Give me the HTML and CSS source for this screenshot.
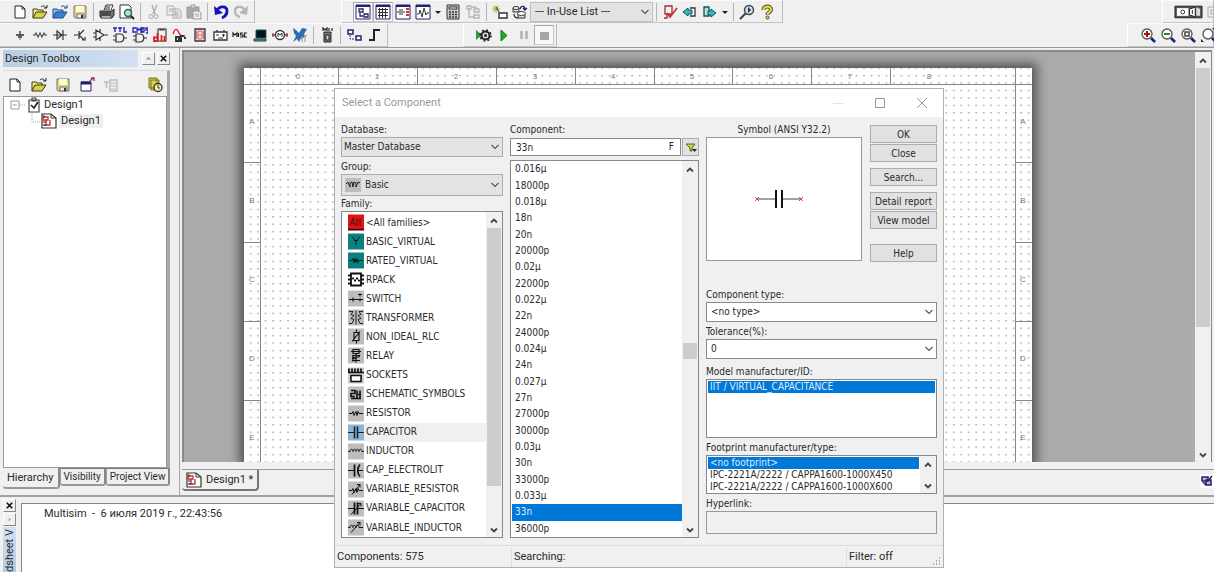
FILE: index.html
```html
<!DOCTYPE html>
<html lang="en">
<head>
<meta charset="utf-8">
<title>Design1 - Multisim</title>
<link rel="stylesheet" href="styles.css">
</head>
<body>
<svg class="defs" aria-hidden="true">
  <symbol id="new" viewBox="0 0 16 16"><path d="M3 2h7l3 3v9H3z" fill="#fff" stroke="#222"/><path d="M10 2v3h3" fill="none" stroke="#222"/></symbol>
  <symbol id="open" viewBox="0 0 16 16"><path d="M1 14V5h4l1 1h5v3" fill="#f5ef86" stroke="#3b3a10"/><path d="M1 14l3-6h11l-4 6z" fill="#d9cf4e" stroke="#3b3a10"/><path d="M9 3c2-2 4-1 5 1M15 1v3h-3" fill="none" stroke="#222"/></symbol>
  <symbol id="openblue" viewBox="0 0 16 16"><path d="M1 14V5h4l1 1h5v3" fill="#8db8ec" stroke="#1d4c8c"/><path d="M1 14l3-6h11l-4 6z" fill="#3d7fd0" stroke="#1d4c8c"/><path d="M9 3c2-2 4-1 5 1M15 1v3h-3" fill="none" stroke="#1d3c7c"/></symbol>
  <symbol id="save" viewBox="0 0 16 16"><path d="M2 2h12v12H3l-1-1z" fill="#dcd67e" stroke="#777"/><path d="M4 2h8v6H4z" fill="#fffbd0"/><path d="M5 10h7v4H5z" fill="#eee" stroke="#777"/><path d="M9 11h2v3H9z" fill="#333"/></symbol>
  <symbol id="print" viewBox="0 0 16 16"><path d="M5 6l2-5h7l-2 5" fill="#fff" stroke="#333"/><path d="M1 7h12l2-2v6l-2 3H2l-1-2z" fill="#777" stroke="#222"/><path d="M2 9h10M2 11h10M7 3h4M6 5h5" stroke="#222"/><path d="M3 13h8" stroke="#eee"/></symbol>
  <symbol id="preview" viewBox="0 0 16 16"><path d="M1 1h9l2 2v11H1z" fill="#fff" stroke="#333"/><circle cx="9" cy="9" r="3.5" fill="#b5e2df" stroke="#266" stroke-width="1.4"/><path d="M12 12l3 3" stroke="#222" stroke-width="2"/></symbol>
  <symbol id="cut" viewBox="0 0 16 16"><path d="M6 1l3 9M11 1L7 10" stroke="#aaa" stroke-width="1.3"/><circle cx="5" cy="12.500" r="2" fill="none" stroke="#aaa"/><circle cx="10" cy="12.500" r="2" fill="none" stroke="#aaa"/></symbol>
  <symbol id="copy" viewBox="0 0 16 16"><path d="M1 2h6l2 2v7H1zM7 5h6l2 2v7H7z" fill="#eee" stroke="#aaa"/><path d="M3 5h4M3 7h3M9 8h4M9 10h4M9 12h4" stroke="#aaa"/></symbol>
  <symbol id="paste" viewBox="0 0 16 16"><path d="M1 3h12v11H1z" fill="#aaa" stroke="#999"/><path d="M5 1h4v3H5z" fill="#ddd" stroke="#999"/><path d="M7 7h6l2 2v6H7z" fill="#eee" stroke="#999"/><path d="M9 10h4M9 12h4" stroke="#aaa"/></symbol>
  <symbol id="undo" viewBox="0 0 16 16"><path d="M4 7C6 1.500 14 1.500 14 7c0 4-2 5-5 7" fill="none" stroke="#1414b8" stroke-width="2.800"/><path d="M1 2l1 9 8-2z" fill="#1414b8"/></symbol>
  <symbol id="redo" viewBox="0 0 16 16"><path d="M12 7C10 1.500 2 1.500 2 7c0 4 2 5 5 6" fill="none" stroke="#b5b5b5" stroke-width="2.400"/><path d="M15 2l-1 9-8-2z" fill="#b5b5b5"/></symbol>
  <symbol id="tog1" viewBox="0 0 16 16"><path d="M1 1h14v14H1z" fill="#fff" stroke="#22226a"/><path d="M1 2h14" stroke="#22226a" stroke-width="2"/><path d="M4 5h4v3H4zM9 10h4v3H9zM5 9v3h3" fill="none" stroke="#22226a" stroke-width="1.300"/></symbol>
  <symbol id="tog2" viewBox="0 0 16 16"><path d="M1 1h14v14H1z" fill="#fff" stroke="#22226a"/><path d="M1 2h14" stroke="#22226a" stroke-width="2"/><path d="M3 5.500h10M3 8.500h10M3 11.500h10M4.500 4v10M7.500 4v10M10.500 4v10" stroke="#333"/></symbol>
  <symbol id="tog3" viewBox="0 0 16 16"><path d="M1 1h14v14H1z" fill="#fff" stroke="#22226a"/><path d="M1 2h14" stroke="#22226a" stroke-width="2"/><path d="M2 8h2M8 8h2M5 5v6M7 5v6" stroke="#333"/><path d="M11 5h3M11 8h3M11 11h3" stroke="#c33" stroke-width="2"/></symbol>
  <symbol id="tog4" viewBox="0 0 16 16"><path d="M1 1h14v14H1z" fill="#fff" stroke="#22226a"/><path d="M1 2h14" stroke="#22226a" stroke-width="2"/><path d="M2 10h2l1-4 2 7 2-9 2 7 1-2h2" fill="none" stroke="#333"/></symbol>
  <symbol id="calc" viewBox="0 0 16 16"><path d="M2 1h12v14H2z" fill="#ccc" stroke="#333"/><path d="M4 3h8v2H4z" fill="#fff" stroke="#333"/><path d="M4 8h8M4 10.500h8M4 13h8" stroke="#333" stroke-width="1.400" stroke-dasharray="2 1"/></symbol>
  <symbol id="hier" viewBox="0 0 16 16"><path d="M2 2h4v3H2zM9 5h5v3H9zM9 11h5v3H9zM4 5v8h5M7 3h4v2" fill="none" stroke="#b5b5b5" stroke-width="1.300"/></symbol>
  <symbol id="wiz" viewBox="0 0 16 16"><path d="M1 2l6 6M7 2L1 8M4 1v8M0 5h8" stroke="#b9a92c"/><path d="M4 3l3 5" stroke="#333"/><path d="M7 9h8v5H7z" fill="#fff" stroke="#333" stroke-width="1.400"/></symbol>
  <symbol id="dbm" viewBox="0 0 16 16"><path d="M1 4h6v4H1zM6 9h7v5H6z" fill="#ddd" stroke="#333"/><ellipse cx="4" cy="4" rx="3" ry="1.500" fill="#fff" stroke="#333"/><ellipse cx="9.500" cy="9.500" rx="4" ry="2" fill="#fff" stroke="#333"/><path d="M8 5c1-4 5-3 5 0m-2-1l2 2 2-2M6 14c-3 0-4-2-4-4" fill="none" stroke="#22226a" stroke-width="1.300"/></symbol>
  <symbol id="erc" viewBox="0 0 16 16"><path d="M3 2h7v8H3zM5 10v4H2M8 10v3" fill="none" stroke="#933" stroke-width="1.300"/><path d="M5 9l3 4 7-9" fill="none" stroke="#c33" stroke-width="1.800"/></symbol>
  <symbol id="back" viewBox="0 0 16 16"><path d="M8 4h5v8H8" fill="#fff" stroke="#333" stroke-width="1.300"/><path d="M1 8l5-4v2h4v4H6v2z" fill="#3bb" stroke="#155"/></symbol>
  <symbol id="fwd" viewBox="0 0 16 16"><path d="M2 3h5v9H2z" fill="#bdd" stroke="#155" stroke-width="1.300"/><path d="M14 9l-5-4v2H6v4h3v2z" fill="#3bb" stroke="#155"/></symbol>
  <symbol id="find" viewBox="0 0 16 16"><circle cx="10" cy="6" r="4.500" fill="#cde" stroke="#444" stroke-width="1.400"/><path d="M1 15l6-6" stroke="#444" stroke-width="2.200"/><path d="M9 3v6l3-3z" fill="#235"/></symbol>
  <symbol id="help" viewBox="0 0 16 16"><path d="M4.500 6C4 2 12 1 12 5.500 12 8 8.500 8 8.500 11" fill="none" stroke="#444" stroke-width="4"/><path d="M4.500 6C4 2 12 1 12 5.500 12 8 8.500 8 8.500 11" fill="none" stroke="#e6df2d" stroke-width="2.200"/><circle cx="8.500" cy="13.500" r="1.500" fill="#e6df2d" stroke="#444"/></symbol>
  <symbol id="gnd" viewBox="0 0 16 16"><path d="M8 4v4M4 8h8M6 10h4M7.500 12h1" stroke="#333" stroke-width="1.300"/></symbol>
  <symbol id="res" viewBox="0 0 16 16"><path d="M1 8h2l1-2 2 4 2-4 2 4 2-4 1 2h2" fill="none" stroke="#444" stroke-width="1.100"/></symbol>
  <symbol id="diode" viewBox="0 0 16 16"><path d="M1 8h14M5 4v8l5-4zM11 3v10" fill="none" stroke="#333" stroke-width="1.200"/></symbol>
  <symbol id="trans" viewBox="0 0 16 16"><path d="M2 8h4M7 4v8M7 8l5-5M7 8l5 5M10 13h3v-3" fill="none" stroke="#333" stroke-width="1.200"/></symbol>
  <symbol id="amp" viewBox="0 0 16 16"><path d="M4 3v10l8-5zM1 6h3M1 10h3M12 8h4M8 2v3M8 11v3" fill="none" stroke="#333" stroke-width="1.200"/></symbol>
  <symbol id="ttl" viewBox="0 0 16 16"><path d="M1 1h4M3 1v4M6 1h4M8 1v4M12 0v5h3" fill="none" stroke="#22b" stroke-width="1.400"/><path d="M4 7h4c5 0 5 8 0 8H4zM1 9h3M1 13h3M12 11h3" fill="none" stroke="#333" stroke-width="1.200"/></symbol>
  <symbol id="cmos" viewBox="0 0 16 16"><path d="M4 1H1v4h3M5 6V1l2 2 2-2v5M10 1h2v4h-2zM16 1h-2v2h2v3h-2" fill="none" stroke="#22b" stroke-width="1.300"/><path d="M4 7h4c5 0 5 8 0 8H4zM1 9h3M1 13h3M12 11h3" fill="none" stroke="#333" stroke-width="1.200"/></symbol>
  <symbol id="dchip" viewBox="0 0 16 16"><path d="M6 2h8v12H6zM8 1v2h4V1" fill="none" stroke="#444" stroke-width="1.200"/><path d="M5.500 6v9M5 10.500H2V14h3M9.500 8v7M12.500 9v6" fill="none" stroke="#d22" stroke-width="1.800"/></symbol>
  <symbol id="mixed" viewBox="0 0 16 16"><path d="M1 7c2-6 4-6 6-1s4 2 6 3" fill="none" stroke="#d22" stroke-width="1.400"/><path d="M4 10h3v4H4zM9 15V9h3M12 11h2" fill="none" stroke="#333" stroke-width="2"/></symbol>
  <symbol id="seg" viewBox="0 0 16 16"><path d="M3 2h10v12H3z" fill="#f5e5e5" stroke="#333" stroke-width="1.300"/><path d="M6 4h4v8H6zM6 8h4M4.500 4v8M11.500 4v8" fill="none" stroke="#c66"/></symbol>
  <symbol id="power" viewBox="0 0 16 16"><path d="M2 5h13v8H2zM5 3v2M12 3v2" fill="#fff" stroke="#333" stroke-width="1.300"/><path d="M4 8h3M10 8h3M11.500 7v3M6 11h5" stroke="#333"/></symbol>
  <symbol id="miscg" viewBox="0 0 16 16"><path d="M1 10V6l2 2 2-2v4M6.500 6v4M11 6H8.500v2H11v2H8M15 6h-2.500v4H15" fill="none" stroke="#222" stroke-width="1.200"/></symbol>
  <symbol id="scr" viewBox="0 0 16 16"><path d="M4 3h10v8H4z" fill="#012" stroke="#165"/><path d="M2 12h12v2H2z" fill="#6aa" stroke="#233"/></symbol>
  <symbol id="motor" viewBox="0 0 16 16"><circle cx="8" cy="8" r="4.500" fill="#fff" stroke="#333" stroke-width="1.300"/><path d="M6 10V6l2 2 2-2v4" fill="none" stroke="#333"/><path d="M1 6v4M15 6v4" stroke="#333"/><path d="M0 8h3M13 8h3" stroke="#a33" stroke-width="1.500"/></symbol>
  <symbol id="ni" viewBox="0 0 16 16"><path d="M1 1l3 2 3 3 3-5 5 1-3 5 1 3-4 1-2 4-2-3-4 3 3-6-2-3z" fill="#2c6fae"/><path d="M10 9v6M13 8v7M9 12l6-4" stroke="#999"/></symbol>
  <symbol id="mcu" viewBox="0 0 16 16"><path d="M4 4V1l2 2 2-2v3M10 1v3M13 1v3" stroke="#222" fill="none" stroke-width="1.200"/><path d="M5 5h7v10H5z" fill="#777" stroke="#222"/><path d="M7 8h3v5H7z" fill="#ddd" stroke="#222"/></symbol>
  <symbol id="block" viewBox="0 0 16 16"><path d="M2 3h5v4H2zM10 9h5v4h-5z" fill="#fff" stroke="#22226a" stroke-width="1.500"/><path d="M4 8v4h5" fill="none" stroke="#333" stroke-dasharray="2 1"/></symbol>
  <symbol id="bus" viewBox="0 0 16 16"><path d="M3 13h5V3h6" fill="none" stroke="#222" stroke-width="2"/></symbol>
  <symbol id="gear" viewBox="0 0 16 16"><path d="M0 3l6 5-6 5z" fill="#2a9a3a"/><circle cx="9.500" cy="8.500" r="4" fill="#ddd" stroke="#222" stroke-width="2"/><circle cx="9.500" cy="8.500" r="5.500" fill="none" stroke="#222" stroke-width="1.500" stroke-dasharray="2 2.300"/><circle cx="9.500" cy="8.500" r="1.500" fill="#222"/></symbol>
  <symbol id="play" viewBox="0 0 16 16"><path d="M5 3l6 5.500-6 5.500z" fill="#18b020" stroke="#187020"/></symbol>
  <symbol id="pause" viewBox="0 0 16 16"><path d="M5.500 4v8M10.500 4v8" stroke="#b0b0b0" stroke-width="2.500"/></symbol>
  <symbol id="stop" viewBox="0 0 16 16"><path d="M4 5h9v8H4z" fill="#a5a5a5"/></symbol>
  <symbol id="zin" viewBox="0 0 16 16"><circle cx="7" cy="7" r="5" fill="#fff" stroke="#555" stroke-width="1.300"/><path d="M4 7h6M7 4v6" stroke="#a11" stroke-width="2"/><path d="M11 11l4 4" stroke="#22227a" stroke-width="2.600"/></symbol>
  <symbol id="zout" viewBox="0 0 16 16"><circle cx="7" cy="7" r="5" fill="#fff" stroke="#555" stroke-width="1.300"/><path d="M4 7h6" stroke="#2a8a2a" stroke-width="2"/><path d="M11 11l4 4" stroke="#22227a" stroke-width="2.600"/></symbol>
  <symbol id="zarea" viewBox="0 0 16 16"><circle cx="7" cy="7" r="5" fill="#fff" stroke="#555" stroke-width="1.300"/><path d="M5 5h4v4H5z" fill="none" stroke="#444" stroke-width="1.500"/><path d="M11 11l4 4" stroke="#22227a" stroke-width="2.600"/></symbol>
  <symbol id="zfit" viewBox="0 0 16 16"><circle cx="8" cy="7" r="5" fill="#fff" stroke="#555" stroke-width="1.300"/><path d="M12 11l3 3" stroke="#22227a" stroke-width="2.600"/><path d="M1 12v3h3zM15 1v3l-3-3z" fill="#222"/></symbol>
  <symbol id="addsheet" viewBox="0 0 16 16"><path d="M2 5h10v9H2z" fill="#fff" stroke="#22226a"/><path d="M2 6h10" stroke="#22226a" stroke-width="3"/><path d="M11 4l3-3M12 1h3v3" stroke="#a24" fill="none" stroke-width="1.300"/></symbol>
  <symbol id="rename" viewBox="0 0 16 16"><path d="M1 5h5M3.500 5v6M7 3h7v11H7z" fill="none" stroke="#bbb" stroke-width="1.400"/><path d="M8 6h5M8 9h5M8 12h5" stroke="#bbb"/></symbol>
  <symbol id="recent" viewBox="0 0 16 16"><path d="M2 1h8v10H2zM4 3h8v10H4z" fill="#d8cf55" stroke="#77701c"/><circle cx="11" cy="10.500" r="4" fill="#f3efa0" stroke="#333" stroke-width="1.300"/><path d="M11 8v3h2" fill="none" stroke="#333"/></symbol>
  <symbol id="check" viewBox="0 0 16 16"><path d="M3 3h10v12H3zM6 1h4v3H6z" fill="#fff" stroke="#444" stroke-width="1.200"/><path d="M5 8l3 3 4-6" fill="none" stroke="#222" stroke-width="1.700"/></symbol>
  <symbol id="sch" viewBox="0 0 16 16"><path d="M1 1h9l5 4v10H1z" fill="#fff" stroke="#333" stroke-width="1.200"/><path d="M10 1v4h5" fill="none" stroke="#333"/><path d="M2 4h5v3H2zM9 7v5H3M5 7v6" fill="none" stroke="#b33" stroke-width="1.300"/><path d="M2 9h3M2 12h3M3 2v3" stroke="#333"/></symbol>
  <symbol id="down" viewBox="0 0 10 10"><path d="M1.500 3L5 6.500 8.500 3" fill="none" stroke="#555" stroke-width="1.100"/></symbol>
  <symbol id="sup" viewBox="0 0 10 10"><path d="M2 6.500l3-3 3 3" fill="none" stroke="#444" stroke-width="1.800"/></symbol>
  <symbol id="sdn" viewBox="0 0 10 10"><path d="M2 3.500l3 3 3-3" fill="none" stroke="#444" stroke-width="1.800"/></symbol>
  <symbol id="tri" viewBox="0 0 8 8"><path d="M1 3h6L4 6z" fill="#222"/></symbol>
</svg>

<header class="bars">
  <div class="bar">
    <div class="group">
      <button class="tb" aria-label="New"><svg><use href="#new"/></svg></button><button class="tb" aria-label="Open"><svg><use href="#open"/></svg></button><button class="tb" aria-label="Open samples"><svg><use href="#openblue"/></svg></button><button class="tb" aria-label="Save"><svg><use href="#save"/></svg></button>
      <i class="sep"></i>
      <button class="tb" aria-label="Print"><svg><use href="#print"/></svg></button><button class="tb" aria-label="Preview"><svg><use href="#preview"/></svg></button>
      <i class="sep"></i>
      <button class="tb" aria-label="Cut"><svg><use href="#cut"/></svg></button><button class="tb" aria-label="Copy"><svg><use href="#copy"/></svg></button><button class="tb" aria-label="Paste"><svg><use href="#paste"/></svg></button>
      <i class="sep"></i>
      <button class="tb" aria-label="Undo"><svg><use href="#undo"/></svg></button><button class="tb" aria-label="Redo"><svg><use href="#redo"/></svg></button>
    </div>
    <div class="group group-view">
      <button class="tb on" aria-label="Toolbox"><svg><use href="#tog1"/></svg></button><button class="tb on" aria-label="Spreadsheet"><svg><use href="#tog2"/></svg></button><button class="tb" aria-label="Netlist"><svg><use href="#tog3"/></svg></button><button class="tb" aria-label="Grapher"><svg><use href="#tog4"/></svg></button><button class="drop" aria-label="Grapher menu"><svg><use href="#tri"/></svg></button><button class="tb" aria-label="Postprocessor"><svg><use href="#calc"/></svg></button><button class="tb" aria-label="Parent sheet"><svg><use href="#hier"/></svg></button>
      <i class="sep"></i>
      <button class="tb" aria-label="Component wizard"><svg><use href="#wiz"/></svg></button><button class="tb" aria-label="Database manager"><svg><use href="#dbm"/></svg></button>
      <span class="combo inuse"><select aria-label="In-use list"><option>--- In-Use List ---</option></select><svg><use href="#down"/></svg></span>
      <i class="sep"></i>
      <button class="tb" aria-label="Rules check"><svg><use href="#erc"/></svg></button><button class="tb" aria-label="Back annotate"><svg><use href="#back"/></svg></button><button class="tb" aria-label="Forward annotate"><svg><use href="#fwd"/></svg></button><button class="drop" aria-label="Annotate menu"><svg><use href="#tri"/></svg></button>
      <i class="sep"></i>
      <button class="tb" aria-label="Find examples"><svg><use href="#find"/></svg></button><button class="tb" aria-label="Help"><svg><use href="#help"/></svg></button>
    </div>
    <div class="group group-switch">
      <button class="tb wide" aria-label="Simulation switch"><svg viewBox="0 0 30 16"><path d="M1 2h28v12H1z" fill="#555" stroke="#222"/><path d="M3 4h12v8H3z" fill="#fff"/><path d="M16 5l6-2v10l-6-2z" fill="#fff" stroke="#222"/><path d="M23 3l4 2v7h-4z" fill="#ddd"/><circle cx="9" cy="8" r="2" fill="none" stroke="#333"/><path d="M19 6v4" stroke="#222"/></svg></button>
      <button class="tb" aria-label="Pause simulation"><svg viewBox="0 0 16 16"><path d="M2 3h14v10H2zM5 6h10v4H5z" fill="#eee" stroke="#aaa"/></svg></button>
    </div>
  </div>
  <div class="bar">
    <div class="group">
      <button class="tb" aria-label="Source"><svg><use href="#gnd"/></svg></button><button class="tb" aria-label="Basic"><svg><use href="#res"/></svg></button><button class="tb" aria-label="Diode"><svg><use href="#diode"/></svg></button><button class="tb" aria-label="Transistor"><svg><use href="#trans"/></svg></button><button class="tb" aria-label="Analog"><svg><use href="#amp"/></svg></button><button class="tb" aria-label="TTL"><svg><use href="#ttl"/></svg></button><button class="tb" aria-label="CMOS"><svg><use href="#cmos"/></svg></button><button class="tb" aria-label="Digital"><svg><use href="#dchip"/></svg></button><button class="tb" aria-label="Mixed"><svg><use href="#mixed"/></svg></button><button class="tb" aria-label="Indicator"><svg><use href="#seg"/></svg></button><button class="tb" aria-label="Power"><svg><use href="#power"/></svg></button><button class="tb" aria-label="Miscellaneous"><svg><use href="#miscg"/></svg></button><button class="tb" aria-label="Peripherals"><svg><use href="#scr"/></svg></button><button class="tb" aria-label="Electromechanical"><svg><use href="#motor"/></svg></button><button class="tb" aria-label="NI"><svg><use href="#ni"/></svg></button>
      <i class="sep"></i>
      <button class="tb" aria-label="MCU"><svg><use href="#mcu"/></svg></button>
      <i class="sep"></i>
      <button class="tb" aria-label="Hierarchical block"><svg><use href="#block"/></svg></button><button class="tb" aria-label="Bus"><svg><use href="#bus"/></svg></button>
    </div>
    <div class="group group-sim">
      <button class="tb" aria-label="Interactive"><svg><use href="#gear"/></svg></button><button class="tb" aria-label="Run"><svg><use href="#play"/></svg></button><button class="tb" aria-label="Pause"><svg><use href="#pause"/></svg></button><button class="tb on" aria-label="Stop"><svg><use href="#stop"/></svg></button>
    </div>
    <div class="group group-zoom">
      <button class="tb" aria-label="Zoom in"><svg><use href="#zin"/></svg></button><button class="tb" aria-label="Zoom out"><svg><use href="#zout"/></svg></button><button class="tb" aria-label="Zoom area"><svg><use href="#zarea"/></svg></button><button class="tb" aria-label="Zoom sheet"><svg><use href="#zfit"/></svg></button>
    </div>
  </div>
</header>

<main class="work">
  <aside class="toolbox">
    <div class="tool-title"><h2>Design Toolbox</h2><button class="mini" aria-label="Collapse"><svg viewBox="0 0 10 10"><path d="M2 6h6L5 3z" fill="#999"/></svg></button><button class="mini" aria-label="Close toolbox"><svg viewBox="0 0 10 10"><path d="M2 2l6 6M8 2L2 8" stroke="#111" stroke-width="1.800"/></svg></button></div>
    <div class="tool-frame">
      <div class="tool-icons">
        <button class="tb" aria-label="New design"><svg><use href="#new"/></svg></button><button class="tb" aria-label="Open design"><svg><use href="#open"/></svg></button><button class="tb" aria-label="Save design"><svg><use href="#save"/></svg></button><button class="tb" aria-label="Close design"><svg><use href="#addsheet"/></svg></button><button class="tb" aria-label="Rename"><svg><use href="#rename"/></svg></button><button class="tb last" aria-label="Recent"><svg><use href="#recent"/></svg></button>
      </div>
      <ul class="tree">
        <li><svg class="expander" viewBox="0 0 20 16"><path d="M5 4h8v8H5zM7 8h4" fill="none" stroke="#999"/><path d="M14 8h6" stroke="#aaa" stroke-dasharray="1 1"/></svg><svg class="ic"><use href="#check"/></svg><span>Design1</span></li>
        <li class="child"><svg class="elbow" viewBox="0 0 10 16"><path d="M1 0v9h9" fill="none" stroke="#aaa" stroke-dasharray="1 1"/></svg><svg class="ic"><use href="#sch"/></svg><span class="cur">Design1</span></li>
      </ul>
    </div>
    <nav class="tabs"><button class="tab active">Hierarchy</button><button class="tab">Visibility</button><button class="tab">Project View</button></nav>
  </aside>

  <section class="docs">
    <div class="view">
      <div class="desk">
        <svg class="sheet" width="788" height="100%">
          <defs><pattern id="dots" x="1" y="6" width="7.480" height="7.430" patternUnits="userSpaceOnUse"><rect x="5" y="1" width="1.300" height="1.300" fill="#8c8c8c"/></pattern></defs>
          <rect width="100%" height="100%" fill="#fff"/><rect width="100%" height="100%" fill="url(#dots)"/>
          <path d="M0 16.500h788M16.500 0v420M771.500 0v420M94.500 0v16M173.500 0v16M252.500 0v16M331.500 0v16M410.500 0v16M488.500 0v16M567.500 0v16M646.500 0v16M0 94.500h16M0 174.500h16M0 253.500h16M0 332.500h16M771 94.500h17M771 174.500h17M771 253.500h17M771 332.500h17" fill="none" stroke="#888"/>
          <g class="ruler"><text x="54" y="11">0</text><text x="133" y="11">1</text><text x="212" y="11">2</text><text x="291" y="11">3</text><text x="369" y="11">4</text><text x="448" y="11">5</text><text x="527" y="11">6</text><text x="606" y="11">7</text><text x="685" y="11">8</text>
          <text x="8" y="56">A</text><text x="8" y="135">B</text><text x="8" y="214">C</text><text x="8" y="293">D</text><text x="8" y="372">E</text><text x="779" y="56">A</text><text x="779" y="135">B</text><text x="779" y="214">C</text><text x="779" y="293">D</text><text x="779" y="372">E</text></g>
        </svg>
      </div>
      <div class="scroll desk-scroll"><svg><use href="#sup"/></svg><i class="thumb"></i><svg><use href="#sdn"/></svg></div>
    </div>
    <div class="doc-tabs"><button class="doc-tab"><svg class="ic"><use href="#sch"/></svg>Design1 *</button><button class="corner" aria-label="Windows"><svg viewBox="0 0 14 14"><path d="M2 3h6v4H2zM6 6h5v5H6z" fill="#bbd" stroke="#22226a" stroke-width="1.500"/><path d="M8 7l4-5M3 8l3 3" stroke="#22226a" stroke-width="1.500"/></svg></button></div>
  </section>
</main>

<footer class="sheetview">
  <div class="strip"><button class="mini" aria-label="Close view"><svg viewBox="0 0 10 10"><path d="M2 2l6 6M8 2L2 8" stroke="#111" stroke-width="1.800"/></svg></button><button class="mini" aria-label="Expand view"><svg viewBox="0 0 10 10"><path d="M4 3l3 2-3 2z" fill="#aaa"/></svg></button><div class="caption"><span>dsheet V</span></div></div>
  <div class="log"><p>Multisim&nbsp; -&nbsp; 6 июля 2019 г., 22:43:56</p></div>
</footer>

<section class="dialog" role="dialog" aria-labelledby="dlg-title">
  <div class="dlg-head"><h1 id="dlg-title">Select a Component</h1>
    <button aria-label="Minimize"><svg viewBox="0 0 12 12"><path d="M1 6.500h10" stroke="#e2e2e2"/></svg></button><button aria-label="Maximize"><svg viewBox="0 0 12 12"><path d="M1.500 1.500h9v9h-9z" fill="none" stroke="#999"/></svg></button><button aria-label="Close window"><svg viewBox="0 0 12 12"><path d="M1 1l10 10M11 1L1 11" stroke="#999"/></svg></button></div>
  <div class="dlg-body">
    <div class="col">
      <label for="database">Database:</label>
      <span class="combo gray"><select id="database"><option>Master Database</option></select><svg><use href="#down"/></svg></span>
      <label for="group" class="gap">Group:</label>
      <span class="combo gray group-combo"><select id="group"><option>Basic</option></select><svg class="lead" viewBox="0 0 16 16"><path d="M0 1h16v14H0z" fill="#bdbdbd"/><path d="M1 7l2-2 2 5V6l2-1 1 5 1-5 2 1v4l2-5 2 1" fill="none" stroke="#222"/></svg><svg><use href="#down"/></svg></span>
      <label class="tight">Family:</label>
      <div class="list">
        <ul class="families" role="listbox" aria-label="Family">
          <li><svg viewBox="0 0 16 16"><path d="M0 0h16v16H0z" fill="#e01515"/><path d="M2 11l3-7 2 7M3 9h3M9 4v7M9 11h1M12 4v7M12 11h1" fill="none" stroke="#711" stroke-width="1.500"/><path d="M0 15h16" stroke="#400" stroke-width="1.500"/></svg>&lt;All families&gt;</li>
          <li><svg viewBox="0 0 16 16"><path d="M0 0h16v16H0z" fill="#0b8080"/><path d="M4 3l4 5 4-5M8 8v4M6 7h4" fill="none" stroke="#022"/></svg>BASIC_VIRTUAL</li>
          <li><svg viewBox="0 0 16 16"><path d="M0 0h16v16H0z" fill="#0b8080"/><path d="M1 8h3l1-2 1 4 1-4 1 4 1-4 1 4 1-2h4" fill="none" stroke="#022"/></svg>RATED_VIRTUAL</li>
          <li><svg viewBox="0 0 16 16"><path d="M3 2h10v12H3z" fill="#fff" stroke="#111" stroke-width="1.800"/><path d="M0 4h3M0 8h3M0 12h3M13 4h3M13 8h3M13 12h3" stroke="#111" stroke-width="2"/><path d="M4 8l1-2 2 4 2-4 2 4 1-2" fill="none" stroke="#111"/></svg>RPACK</li>
          <li><svg viewBox="0 0 16 16"><path d="M0 0h16v16H0z" fill="#bdbdbd"/><path d="M1 9h14M5 7v4M12 8v3" stroke="#111" stroke-width="1.200"/><path d="M10 4h4M12 3v3" stroke="#111"/></svg>SWITCH</li>
          <li><svg viewBox="0 0 16 16"><path d="M0 0h16v16H0z" fill="#bdbdbd"/><path d="M1 2h4l-2 3 3 1-3 3 3 1-2 4H1M15 2h-4l2 3-3 1 3 3-3 1 2 4h3M8 1v14" fill="none" stroke="#222"/></svg>TRANSFORMER</li>
          <li><svg viewBox="0 0 16 16"><path d="M0 0h16v16H0z" fill="#bdbdbd"/><path d="M6 4h5v8H6zM8.500 1v3M8.500 12v3M4 13l8-10" fill="none" stroke="#111" stroke-width="1.200"/></svg>NON_IDEAL_RLC</li>
          <li><svg viewBox="0 0 16 16"><path d="M0 0h16v16H0z" fill="#bdbdbd"/><path d="M5 2h6v4H5zM3 4h10M8 6v9M4 8h8M4 11l8-2M4 13h8M5 8v6" fill="none" stroke="#111" stroke-width="1.200"/></svg>RELAY</li>
          <li><svg viewBox="0 0 16 16"><path d="M0 0h16v16H0z" fill="#ccc"/><path d="M1 1v4M4 1v4M7 1v4M10 1v4M13 1v4M0 5h16M2 11h2M12 11h2" stroke="#111" stroke-width="1.700"/><path d="M3 8h10v6H3z" fill="#fff" stroke="#111" stroke-width="1.500"/></svg>SOCKETS</li>
          <li><svg viewBox="0 0 16 16"><path d="M0 0h16v16H0z" fill="#bdbdbd"/><path d="M3 4h4v3H3v3h4M9 4v8M12 4v8M9 8h4M3 12h10" fill="none" stroke="#111" stroke-width="1.600"/></svg>SCHEMATIC_SYMBOLS</li>
          <li><svg viewBox="0 0 16 16"><path d="M0 0h16v16H0z" fill="#bdbdbd"/><path d="M1 8h3l1-2 1 4 2-4 1 4 1-4 1 2h4" fill="none" stroke="#111"/></svg>RESISTOR</li>
          <li class="sel" aria-selected="true"><svg viewBox="0 0 16 16"><path d="M0 0h16v16H0z" fill="#8db4d4"/><path d="M0 8h6M10 8h6" stroke="#123"/><path d="M6.500 2v12M9.500 2v12" stroke="#123" stroke-width="1.600"/></svg>CAPACITOR</li>
          <li><svg viewBox="0 0 16 16"><path d="M0 0h16v16H0z" fill="#bdbdbd"/><path d="M0 8h2c0-3 3-3 3 0 0-3 3-3 3 0 0-3 3-3 3 0 0-3 3-3 3 0h2" fill="none" stroke="#111"/></svg>INDUCTOR</li>
          <li><svg viewBox="0 0 16 16"><path d="M0 0h16v16H0z" fill="#bdbdbd"/><path d="M0 8h6M9 8h6" stroke="#111"/><path d="M6.500 2v12M12 2c-3 3-3 9 0 12" fill="none" stroke="#111" stroke-width="1.700"/></svg>CAP_ELECTROLIT</li>
          <li><svg viewBox="0 0 16 16"><path d="M0 0h16v16H0z" fill="#bdbdbd"/><path d="M1 9h3l1-2 1 4 2-4 1 4 1-4 1 2h4M4 13l8-10M9 3h3v3" fill="none" stroke="#111"/></svg>VARIABLE_RESISTOR</li>
          <li><svg viewBox="0 0 16 16"><path d="M0 0h16v16H0z" fill="#bdbdbd"/><path d="M0 8h6M10 8h6M3 14L13 3M10 3h3v3" fill="none" stroke="#111"/><path d="M6.500 2v12M9.500 2v12" stroke="#111" stroke-width="1.700"/></svg>VARIABLE_CAPACITOR</li>
          <li><svg viewBox="0 0 16 16"><path d="M0 0h16v16H0z" fill="#bdbdbd"/><path d="M0 8h2c0-3 3-3 3 0 0-3 3-3 3 0 0-3 3-3 3 0h4M3 13l9-10M9 3h3v3" fill="none" stroke="#111"/></svg>VARIABLE_INDUCTOR</li>
        </ul>
        <div class="scroll fam-scroll"><svg><use href="#sup"/></svg><i class="thumb"></i><svg><use href="#sdn"/></svg></div>
      </div>
    </div>

    <div class="col">
      <label for="component">Component:</label>
      <div class="search"><span class="field"><input id="component" value="33n"><span class="unit">F</span></span><button class="filter" aria-label="Filter"><svg viewBox="0 0 14 14"><path d="M2 4h9L8 8v3H6V8z" fill="#c3cf45" stroke="#5e6b12"/><path d="M8 9h5l-2.500 3z" fill="#222"/></svg></button></div>
      <div class="list values-list">
        <ul class="values" role="listbox" aria-label="Component">
          <li>0.016µ</li><li>18000p</li><li>0.018µ</li><li>18n</li><li>20n</li><li>20000p</li><li>0.02µ</li><li>22000p</li><li>0.022µ</li><li>22n</li><li>24000p</li><li>0.024µ</li><li>24n</li><li>0.027µ</li><li>27n</li><li>27000p</li><li>30000p</li><li>0.03µ</li><li>30n</li><li>33000p</li><li>0.033µ</li><li class="sel" aria-selected="true">33n</li><li>36000p</li>
        </ul>
        <div class="scroll val-scroll"><svg><use href="#sup"/></svg><i class="thumb"></i><svg><use href="#sdn"/></svg></div>
      </div>
    </div>

    <div class="col">
      <div class="top">
        <div class="symbol"><span class="label">Symbol (ANSI Y32.2)</span>
          <div class="canvas"><svg viewBox="0 0 50 20"><path d="M3 10h19M28 10h19" stroke="#444"/><path d="M22 1v18M28 1v18" stroke="#111" stroke-width="2"/><path d="M1 8l4 4M5 8l-4 4M45 8l4 4M49 8l-4 4" stroke="#d44"/></svg></div>
        </div>
        <div class="actions"><button class="btn">OK</button><button class="btn">Close</button><button class="btn spaced">Search...</button><button class="btn spaced">Detail report</button><button class="btn">View model</button><button class="btn far">Help</button></div>
      </div>
      <label for="ctype" class="after-symbol">Component type:</label>
      <span class="combo"><select id="ctype"><option>&lt;no type&gt;</option></select><svg><use href="#down"/></svg></span>
      <label for="tol" class="gap">Tolerance(%):</label>
      <span class="combo"><select id="tol"><option>0</option></select><svg><use href="#down"/></svg></span>
      <label class="wide-gap">Model manufacturer/ID:</label>
      <div class="list models"><ul role="listbox" aria-label="Model manufacturer"><li class="sel">IIT / VIRTUAL_CAPACITANCE</li></ul></div>
      <label class="gap">Footprint manufacturer/type:</label>
      <div class="list prints"><ul role="listbox" aria-label="Footprint"><li class="sel">&lt;no footprint&gt;</li><li>IPC-2221A/2222 / CAPPA1600-1000X450</li><li>IPC-2221A/2222 / CAPPA1600-1000X600</li></ul><div class="scroll"><svg><use href="#sup"/></svg><svg><use href="#sdn"/></svg></div></div>
      <label for="link" class="gap">Hyperlink:</label>
      <input id="link" class="link" readonly>
    </div>
  </div>
  <div class="status"><span>Components: 575</span><span>Searching:</span><span>Filter: off</span><svg class="grip" viewBox="0 0 10 10"><path d="M8 1h1M5 4h1M8 4h1M2 7h1M5 7h1M8 7h1" stroke="#aaa" stroke-width="2"/></svg></div>
</section>
</body>
</html>
```

FILE: styles.css
```css
* { box-sizing: border-box; }
html { height: 100%; }
body {
  margin: 0;
  height: 100%;
  display: flex;
  flex-direction: column;
  overflow: hidden;
  position: relative;
  background: #f0f0f0;
  color: #2a2a2a;
  font: 11px/14px Roboto, "Noto Sans", sans-serif;
}
.defs { position: absolute; width: 0; height: 0; }
button, input, select { font: inherit; color: inherit; margin: 0; padding: 0; }
button { border: 0; background: none; }
ul { list-style: none; margin: 0; padding: 0; }
h1, h2, p { margin: 0; font: inherit; }
svg { display: block; flex: none; }
.ic { width: 16px; height: 16px; }

/* toolbars */
.bars { flex: none; border-bottom: 1px solid #999; }
.bar { display: flex; height: 23px; }
.bar + .bar { height: 24px; }
.group {
  display: flex;
  align-items: center;
  flex: none;
  padding: 0 3px 0 10px;
  border-right: 1px solid #bbb;
  border-bottom: 1px solid #c4c4c4;
  border-top: 1px solid #fafafa;
}
.group-view { margin-left: 86px; padding-left: 11px; padding-right: 5px; border-left: 1px solid #fff; }
.group-switch { margin-left: auto; width: 52px; overflow: hidden; border-left: 1px solid #fff; }
.group-sim { margin-left: 75px; border-left: 1px solid #fff; padding-right: 2px; }
.group-zoom { margin-left: auto; width: 87px; padding-right: 0; border-left: 1px solid #fff; }
.tb { width: 20px; height: 20px; flex: none; display: flex; align-items: center; justify-content: center; }
.tb svg { width: 16px; height: 16px; }
.tb.on { background: #f8f8f8; border: 1px solid #c8c8c8; border-top-color: #aaa; border-left-color: #aaa; }
.tb.wide { width: 31px; }
.tb.wide svg { width: 29px; height: 16px; }
.drop { width: 10px; display: flex; justify-content: center; flex: none; }
.drop svg { width: 8px; height: 8px; }
.sep { width: 1px; height: 18px; margin: 0 3px; background: #b4b4b4; flex: none; }

/* drop-downs */
.combo { display: grid; height: 20px; align-items: center; }
.combo > * { grid-area: 1 / 1; }
.combo select {
  appearance: none;
  width: 100%;
  height: 100%;
  padding: 0 4px;
  border: 1px solid #8a8a8a;
  border-radius: 0;
  background: #fff;
}
.combo svg { width: 10px; height: 10px; justify-self: end; margin-right: 3px; pointer-events: none; }
.combo.gray select { background: #e3e3e3; border-color: #adadad; padding-left: 2px; }
.combo.inuse { width: 123px; flex: none; }
.combo.inuse select { background: #e3e3e3; border-color: #c0c0c0; }

/* work area */
.work { flex: 1; min-height: 0; display: flex; }
.toolbox {
  width: 180px;
  flex: none;
  display: flex;
  flex-direction: column;
  padding: 2px 9px 5px 3px;
  border-right: 1px solid #a8a8a8;
}
.tool-title { display: flex; gap: 2px; align-items: center; height: 17px; }
.tool-title h2 { flex: 1; padding-left: 2px; line-height: 17px; background: linear-gradient(90deg, #b9cee3, #d3e1f2); }
.mini {
  width: 13px;
  height: 13px;
  flex: none;
  border: 1px solid;
  border-color: #fff #888 #888 #fff;
  display: flex;
  align-items: center;
  justify-content: center;
}
.mini svg { width: 9px; height: 9px; }
.tool-title .mini:nth-child(2) { margin-left: 2px; }
.tool-frame {
  flex: 1;
  display: flex;
  flex-direction: column;
  margin-top: 3px;
  border-right: 3px solid #a8a8a8;
  border-top: 1px solid #ddd;
}
.tool-icons { display: flex; gap: 4px; height: 25px; align-items: center; padding: 2px 0 0 2px; }
.tool-icons .last { margin-left: auto; margin-right: 2px; }
.tree { flex: 1; background: #fff; border: 1px solid #999; }
.tree li { display: flex; align-items: center; height: 16px; padding-left: 2px; }
.tree span { padding: 0 2px; }
.tree .expander { width: 20px; height: 16px; }
.tree .child { padding-left: 27px; }
.tree .elbow { width: 10px; height: 16px; }
.tree .cur { background: #efefef; margin-left: 2px; }
.tabs { display: flex; height: 22px; align-items: flex-start; font-size: 10px; }
.tab { height: 18px; padding: 0 3px; border: 1px solid #999; border-top-color: #777; border-right: 2px solid #888; border-bottom: 2px solid #999; border-radius: 0 0 3px 3px; white-space: nowrap; }
.tab.active { height: 21px; border-left: 0; border-top: 0; font-size: 11px; padding: 0 4px; }

.docs { flex: 1; min-width: 0; display: flex; flex-direction: column; padding-left: 2px; }
.view { flex: 1; min-height: 0; display: flex; margin: 2px 2px 7px 0; border: 2px solid #8a8a8a; border-width: 2px 1px 0 2px; }
.desk { flex: 1; min-width: 0; overflow: hidden; background: #ababab; padding: 16px 0 0 60px; }
.sheet { box-shadow: 0 0 10px 5px #555; }
.ruler text { font: 8px "Liberation Sans", sans-serif; fill: #777; text-anchor: middle; }
.scroll { display: flex; flex-direction: column; justify-content: space-between; align-items: center; width: 16px; flex: none; background: #f0f0f0; padding: 4px 0 2px; }
.scroll svg { width: 10px; height: 10px; }
.scroll .thumb { width: 14px; background: #cdcdcd; }
.desk-scroll .thumb { flex: 0 0 64%; margin: 2px 0 auto; }
.doc-tabs { flex: none; display: flex; justify-content: space-between; height: 26px; border-top: 1px solid #999; }
.doc-tab { height: 21px; display: flex; align-items: center; gap: 4px; padding: 0 4px; border: solid #777; border-width: 0 2px 2px 0; border-radius: 0 0 4px 4px; }
.corner { width: 14px; height: 14px; margin-top: 4px; background: #fff; }
.corner svg { width: 14px; height: 14px; }

/* spreadsheet view */
.sheetview { flex: none; display: flex; height: 77px; border-top: 2px solid #a0a0a0; background: #f0f0f0; }
.strip { width: 21px; flex: none; display: flex; flex-direction: column; gap: 1px; padding: 2px 0 0 3px; }
.caption { width: 13px; flex: 1; display: flex; background: linear-gradient(#d3e1f2, #b4cbe2); }
.caption span { writing-mode: vertical-rl; transform: rotate(180deg); line-height: 13px; white-space: nowrap; }
.log { flex: 1; margin-top: 6px; border: solid #888; border-width: 1px 0 0 1px; background: #fff; padding: 3px 22px; }

/* component window */
.dialog {
  position: absolute;
  left: 334px;
  top: 88px;
  width: 610px;
  height: 480px;
  display: flex;
  flex-direction: column;
  background: #f0f0f0;
  border: 1px solid #b0b0b0;
  font: 10px/12px "DejaVu Sans Condensed", "DejaVu Sans", sans-serif;
}
.dlg-head { display: flex; align-items: center; height: 28px; flex: none; background: #fff; padding: 0 15px 0 7px; color: #999; font: 11px/14px Roboto, "Noto Sans", sans-serif; gap: 30px; }
.dlg-head h1 { flex: 1; }
.dlg-head svg { width: 12px; height: 12px; }
.dlg-body { flex: 1; min-height: 0; display: grid; grid-template-columns: 162px 189px 231px; gap: 7px; padding: 6px 6px 7px; }
.col { display: flex; flex-direction: column; min-height: 0; min-width: 0; }
.col label, .label { display: block; height: 14px; line-height: 14px; flex: none; white-space: nowrap; }
.col .gap { margin-top: 3px; }
.col .tight { margin-top: 1px; }
.col .wide-gap { margin-top: 6px; }
.group-combo { height: 22px; }
.combo.group-combo select { padding-left: 23px; }
.combo svg.lead { justify-self: start; width: 16px; height: 16px; margin: 0 0 0 4px; }
.list { flex: 1; min-height: 0; display: flex; border: 1px solid #828790; background: #fff; overflow: hidden; }
.list ul { flex: 1; min-width: 0; white-space: nowrap; }
.families, .values { display: flex; flex-direction: column; }
.families { padding: 1px 0 0 6px; }
.families li, .values li { flex: 1; min-height: 0; display: flex; align-items: center; }
.families li { gap: 2px; }
.families li svg { width: 16px; height: 17px; }
.families .sel { background: linear-gradient(90deg, #fff 16px, #f0f0f0 16px); }
.fam-scroll .thumb { flex: 0 0 81%; margin: 2px 0 auto; }
.search { display: flex; gap: 1px; height: 18px; flex: none; margin: 1px 0 4px; }
.field { flex: 1; display: grid; align-items: center; }
.field > * { grid-area: 1 / 1; min-width: 0; }
.field input { width: 100%; height: 100%; padding: 0 5px; border: 1px solid #888; background: #fff; }
.unit { justify-self: end; margin-right: 7px; color: #224; }
.filter { width: 17px; background: #e1e1e1; border: 1px solid #adadad; display: flex; align-items: center; justify-content: center; }
.filter svg { width: 14px; height: 14px; }
.values { padding-left: 1px; }
.values li { padding-left: 3px; }
.list .sel:not(.families li) { background: #0078d7; color: #dcecff; }
.val-scroll .thumb { flex: 0 0 16px; margin-top: 1px; }
.top { display: grid; grid-template-columns: 156px 67px; justify-content: space-between; }
.symbol .label { text-align: center; }
.canvas { height: 124px; border: 1px solid #999; background: #fff; display: flex; align-items: center; justify-content: center; }
.canvas svg { width: 50px; height: 20px; margin-right: 10px; }
.actions { display: flex; flex-direction: column; gap: 1px; padding-top: 2px; }
.btn { height: 18px; background: #e1e1e1; border: 1px solid #adadad; line-height: 15px; white-space: nowrap; }
.btn.spaced { margin-top: 5px; }
.btn.far { margin-top: 14px; }
.col .after-symbol { margin-top: 26px; }
.list.models { flex: 0 0 59px; }
.list.prints { flex: 0 0 39px; }
.models ul, .prints ul { padding: 1px; }
.models li, .prints li { padding-left: 2px; }
.prints li { height: 12px; }
.link { height: 23px; flex: none; border: 1px solid #999; background: #f0f0f0; padding: 0 4px; }
.status { flex: none; height: 22px; display: grid; grid-template-columns: 176px 335px 1fr 12px; align-items: center; border-top: 1px solid #dcdcdc; font: 11px/14px Roboto, "Noto Sans", sans-serif; }
.status span { padding-left: 2px; border-left: 1px solid #e0e0e0; line-height: 20px; }
.status span:first-child { border-left: 0; }
.grip { width: 10px; height: 10px; align-self: end; }
```
